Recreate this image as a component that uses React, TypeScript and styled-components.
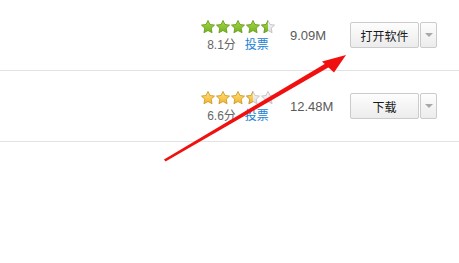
import React from "react";
import styled, { createGlobalStyle } from "styled-components";

const Global = createGlobalStyle`
  html, body { margin: 0; padding: 0; background: #fff; }
  body { font-family: Arial, "Liberation Sans", "Noto Sans CJK SC", sans-serif; }
`;

const Page = styled.div`
  position: relative;
  width: 459px;
  height: 263px;
  overflow: hidden;
  background: #fff;
`;

const List = styled.div`
  display: flex;
  flex-direction: column;
`;

const Row = styled.div`
  height: 70px;
  display: flex;
  align-items: center;
  justify-content: flex-end;
  padding-right: 22px;
  border-bottom: 1px solid #e3e3e3;
`;

const Rating = styled.div`
  width: 76px;
  margin-right: 14px;
  display: flex;
  flex-direction: column;
  align-items: center;
  gap: 4px;
  margin-top: 2px;
`;

const Stars = styled.div`
  display: flex;
  gap: 1px;
  height: 14px;
`;

const ScoreLine = styled.div`
  display: flex;
  gap: 9px;
  font-size: 12px;
  line-height: 14px;
  font-family: "Liberation Sans", Arial, "Noto Sans CJK SC", sans-serif;
`;

const Score = styled.span`
  color: #666;
`;

const Vote = styled.span`
  color: #1a82d4;
`;

const Size = styled.div`
  width: 60px;
  font-size: 13px;
  color: #5a5a5a;
  font-family: "Liberation Sans", Arial, sans-serif;
`;

const ButtonGroup = styled.div`
  display: flex;
  height: 26px;
`;

const MainButton = styled.button`
  width: 69px;
  height: 26px;
  box-sizing: border-box;
  border: 1px solid #cbcbcb;
  border-radius: 2px;
  background: linear-gradient(#fdfdfd, #ececec);
  font-family: "Noto Sans CJK SC", sans-serif;
  font-size: 12px;
  color: #1a1a1a;
  padding: 0;
  display: flex;
  align-items: center;
  justify-content: center;
`;

const DropButton = styled.button`
  width: 17px;
  height: 26px;
  margin-left: 1px;
  box-sizing: border-box;
  border: 1px solid #cbcbcb;
  border-radius: 2px;
  background: linear-gradient(#fdfdfd, #ececec);
  padding: 0;
  display: flex;
  align-items: center;
  justify-content: center;
`;

const Caret = styled.span`
  width: 0;
  height: 0;
  border-left: 4px solid transparent;
  border-right: 4px solid transparent;
  border-top: 4px solid #a8a8a8;
`;

const ArrowLayer = styled.svg`
  position: absolute;
  left: 0;
  top: 0;
  pointer-events: none;
`;

type Fill = "full" | "half" | "empty";
const palettes = {
  green: { top: "#a9d94a", bottom: "#74b21e", stroke: "#5f9a14" },
  gold: { top: "#ffe082", bottom: "#f2b52a", stroke: "#c9951c" },
};

const STAR = "12,0.8 15.4,7.7 23.2,8.7 17.5,14 19,21.8 12,18 5,21.8 6.5,14 0.8,8.7 8.6,7.7";

function Star({ fill, color, id }: { fill: Fill; color: "green" | "gold"; id: string }) {
  const p = palettes[color];
  return (
    <svg width="14" height="14" viewBox="0 0 24 24">
      <defs>
        <linearGradient id={`${id}-c`} x1="0" y1="0" x2="0" y2="1">
          <stop offset="0" stopColor={p.top} />
          <stop offset="1" stopColor={p.bottom} />
        </linearGradient>
        <linearGradient id={`${id}-g`} x1="0" y1="0" x2="0" y2="1">
          <stop offset="0" stopColor="#fafafa" />
          <stop offset="1" stopColor="#dcdcdc" />
        </linearGradient>
        <clipPath id={`${id}-h`}>
          <rect x="0" y="0" width="12" height="24" />
        </clipPath>
      </defs>
      {fill !== "full" && (
        <polygon points={STAR} fill={`url(#${id}-g)`} stroke="#bdbdbd" strokeWidth="1.4" strokeLinejoin="round" />
      )}
      {fill !== "empty" && (
        <g clipPath={fill === "half" ? `url(#${id}-h)` : undefined}>
          <polygon points={STAR} fill={`url(#${id}-c)`} stroke={p.stroke} strokeWidth="1.4" strokeLinejoin="round" />
        </g>
      )}
    </svg>
  );
}

type Item = { fills: Fill[]; color: "green" | "gold"; score: string; size: string; action: string };

const items: Item[] = [
  { fills: ["full", "full", "full", "full", "half"], color: "green", score: "8.1分", size: "9.09M", action: "打开软件" },
  { fills: ["full", "full", "full", "half", "empty"], color: "gold", score: "6.6分", size: "12.48M", action: "下载" },
];

export default function App() {
  return (
    <Page>
      <Global />
      <List>
        {items.map((it, r) => (
          <Row key={r}>
            <Rating>
              <Stars>
                {it.fills.map((f, i) => (
                  <Star key={i} fill={f} color={it.color} id={`s${r}-${i}`} />
                ))}
              </Stars>
              <ScoreLine>
                <Score>{it.score}</Score>
                <Vote>投票</Vote>
              </ScoreLine>
            </Rating>
            <Size>{it.size}</Size>
            <ButtonGroup>
              <MainButton>{it.action}</MainButton>
              <DropButton>
                <Caret />
              </DropButton>
            </ButtonGroup>
          </Row>
        ))}
      </List>
      <ArrowLayer width="459" height="263" viewBox="0 0 459 263">
        <polygon points="164,159.5 165.5,161.5 330,66.5 328,62" fill="#f01010" />
        <polygon points="346,55 322,61.5 334,72.5" fill="#f01010" />
      </ArrowLayer>
    </Page>
  );
}
